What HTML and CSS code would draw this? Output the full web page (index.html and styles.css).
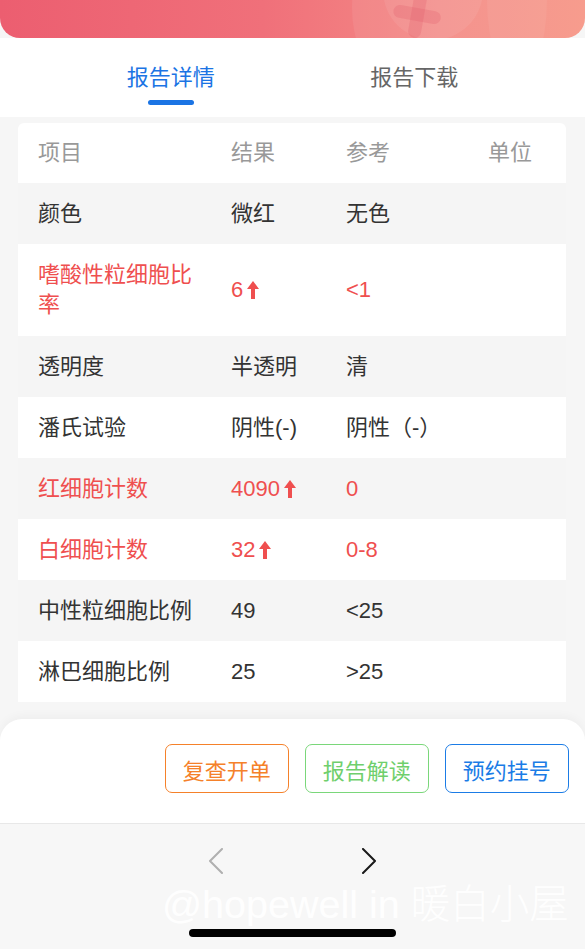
FILE: index.html
```html
<!DOCTYPE html>
<html lang="zh-CN">
<head>
<meta charset="utf-8">
<title>报告详情</title>
<link rel="stylesheet" href="styles.css">
</head>
<body>
<div class="page">
  <header class="banner">
    <div class="banner-title">报告单号</div>
    <div class="deco ring-outer"></div>
    <div class="deco ring-inner"></div>
    <div class="deco ring-right"></div>
    <div class="deco plus"><span class="plus-h"></span><span class="plus-v"></span></div>
  </header>

  <nav class="tabs">
    <div class="tab active"><span class="tab-label">报告详情</span><span class="tab-bar"></span></div>
    <div class="tab"><span class="tab-label">报告下载</span></div>
  </nav>

  <section class="content">
    <div class="card">
      <div class="row head"><span>项目</span><span>结果</span><span>参考</span><span>单位</span></div>
      <div class="row alt"><span>颜色</span><span>微红</span><span>无色</span><span></span></div>
      <div class="row tall warn"><span>嗜酸性粒细胞比率</span><span>6<svg class="up" viewBox="0 0 12 18"><path d="M6 0 L12 8 L8 8 L8 18 L4 18 L4 8 L0 8 Z"/></svg></span><span>&lt;1</span><span></span></div>
      <div class="row alt"><span>透明度</span><span>半透明</span><span>清</span><span></span></div>
      <div class="row"><span>潘氏试验</span><span>阴性(-)</span><span>阴性（-）</span><span></span></div>
      <div class="row alt warn"><span>红细胞计数</span><span>4090<svg class="up" viewBox="0 0 12 18"><path d="M6 0 L12 8 L8 8 L8 18 L4 18 L4 8 L0 8 Z"/></svg></span><span>0</span><span></span></div>
      <div class="row warn"><span>白细胞计数</span><span>32<svg class="up" viewBox="0 0 12 18"><path d="M6 0 L12 8 L8 8 L8 18 L4 18 L4 8 L0 8 Z"/></svg></span><span>0-8</span><span></span></div>
      <div class="row alt"><span>中性粒细胞比例</span><span>49</span><span>&lt;25</span><span></span></div>
      <div class="row"><span>淋巴细胞比例</span><span>25</span><span>&gt;25</span><span></span></div>
    </div>
  </section>

  <div class="sheet">
    <button class="btn btn-orange">复查开单</button>
    <button class="btn btn-green">报告解读</button>
    <button class="btn btn-blue">预约挂号</button>
  </div>

  <footer class="navbar">
    <div class="arrows">
      <svg class="chev chev-prev" viewBox="0 0 16 26"><polyline points="14,1 2,13 14,25"/></svg>
      <svg class="chev chev-next" viewBox="0 0 16 26"><polyline points="2,1 14,13 2,25"/></svg>
    </div>
    <div class="watermark">@hopewell in 暖白小屋</div>
    <div class="home-bar"></div>
  </footer>
</div>
</body>
</html>
```

FILE: styles.css
```css
* { box-sizing: border-box; }
html, body { margin: 0; padding: 0; }
body {
  background: #f6f6f6;
  font-family: "Liberation Sans", "Noto Sans CJK SC", sans-serif;
  color: #333;
}
.page {
  width: 585px;
  height: 949px;
  display: flex;
  flex-direction: column;
  overflow: hidden;
}

/* banner */
.banner {
  position: relative;
  height: 38px;
  flex: none;
  border-radius: 0 0 20px 20px;
  overflow: hidden;
  background: linear-gradient(90deg, #ec5e70 0%, #f0707a 45%, #f48a86 75%, #f79585 100%);
}
.banner-title {
  margin: -24px 0 0 26px;
  font-size: 22px;
  line-height: 28px;
  font-weight: bold;
  color: #fff;
}
.deco { position: absolute; border-radius: 50%; }
.ring-outer {
  left: 352px; top: -110px;
  width: 236px; height: 236px;
  background: rgba(255,255,255,0.07);
}
.ring-inner {
  left: 383px; top: -60px;
  width: 100px; height: 100px;
  background: rgba(255,255,255,0.07);
}
.ring-right {
  left: 487px; top: -80px;
  width: 60px; height: 160px;
  border-radius: 50%;
  background: rgba(255,255,255,0.06);
}
.plus {
  left: 393px; top: -8px;
  width: 48px; height: 46px;
  border-radius: 0;
  transform: rotate(10deg);
}
.plus-h, .plus-v {
  position: absolute;
  background: rgba(225,80,100,0.22);
  border-radius: 7px;
}
.plus-h { left: 0; top: 16px; width: 48px; height: 13px; }
.plus-v { left: 18px; top: 0; width: 13px; height: 46px; }

/* tabs */
.tabs {
  flex: none;
  height: 79px;
  background: #fff;
  display: grid;
  grid-template-columns: 1fr 1fr;
  padding: 0 49px;
}
.tab {
  display: flex;
  flex-direction: column;
  align-items: center;
  padding-top: 23px;
  font-family: "Noto Sans CJK SC", sans-serif;
  font-size: 22px;
  line-height: 28px;
  color: #666;
}
.tab.active { color: #1b74e4; }
.tab-bar {
  margin-top: 11px;
  width: 46px;
  height: 5px;
  border-radius: 3px;
  background: #1b74e4;
}

/* table */
.content {
  flex: none;
  padding: 6px 19px 0 18px;
}
.card {
  background: #fff;
  border-radius: 6px 6px 0 0;
  overflow: hidden;
}
.row {
  display: grid;
  grid-template-columns: 193px 115px 142px 1fr;
  align-items: center;
  padding-left: 20px;
  height: 61px;
  font-size: 22px;
  line-height: 30px;
  color: #333;
}
.row > span:first-child { padding-right: 20px; }
.row > span { display: flex; align-items: center; }
.row.head { height: 60px; color: #999; }
.row.alt { background: #f5f5f5; }
.row.tall { height: 92px; }
.row.tall > span:first-child { display: block; }
.row.warn { color: #ef4f4f; }
.up {
  width: 12px;
  height: 18px;
  margin-left: 4px;
  fill: #ef4f4f;
}

/* bottom sheet */
.sheet {
  flex: none;
  margin-top: 17px;
  height: 104px;
  background: #fff;
  border-radius: 22px 22px 0 0;
  box-shadow: 0 -3px 10px rgba(0,0,0,0.035);
  display: flex;
  justify-content: flex-end;
  align-items: flex-start;
  gap: 15.5px;
  padding: 25px 16px 0 0;
}
.btn {
  width: 124.5px;
  height: 49px;
  border-radius: 7px;
  background: #fff;
  font-family: "Noto Sans CJK SC", sans-serif;
  font-size: 22px;
  line-height: 28px;
  padding: 0;
  border: 1.5px solid;
}
.btn-orange { color: #f5812a; border-color: #f5812a; }
.btn-green { color: #6fcf6c; border-color: #7ad77a; }
.btn-blue { color: #1b7ce6; border-color: #1b7ce6; }

/* nav bar */
.navbar {
  position: relative;
  flex: 1;
  background: #f7f7f7;
  border-top: 1px solid #e8e8e8;
}
.arrows {
  display: flex;
  justify-content: center;
  gap: 137px;
  padding-top: 24px;
}
.chev {
  width: 16px;
  height: 26px;
  fill: none;
  stroke-width: 2;
  stroke-linecap: round;
  stroke-linejoin: round;
}
.chev-prev { stroke: #b0b0b0; }
.chev-next { stroke: #1a1a1a; }
.watermark {
  position: absolute;
  left: 162px;
  top: 57px;
  font-family: "Liberation Sans", "Noto Sans CJK SC", sans-serif;
  font-weight: 300;
  font-size: 39.5px;
  line-height: 46px;
  color: rgba(255,255,255,0.95);
  white-space: nowrap;
}
.home-bar {
  position: absolute;
  left: 189px;
  bottom: 12px;
  width: 207px;
  height: 8px;
  border-radius: 4px;
  background: #000;
}
```
